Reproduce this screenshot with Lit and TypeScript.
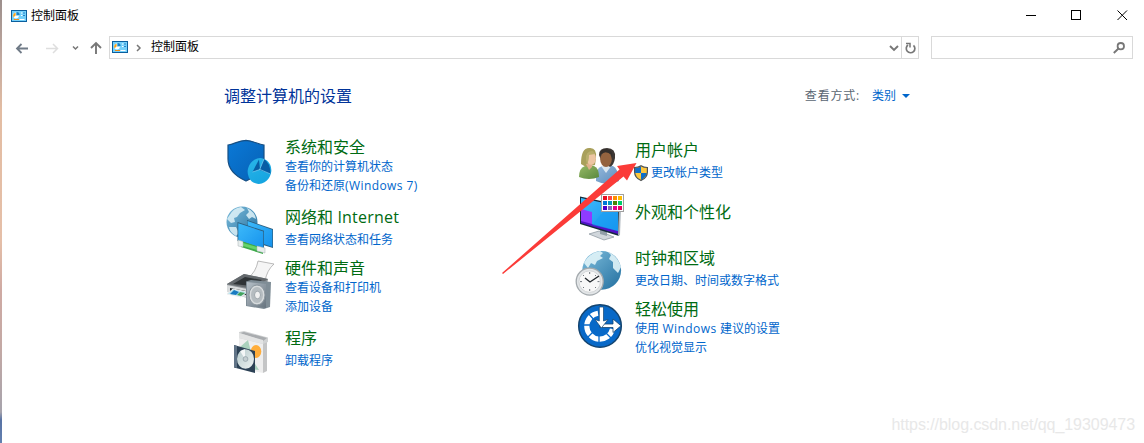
import { LitElement, html, css, svg, TemplateResult } from "lit";
import { customElement } from "lit/decorators.js";

interface Category {
  title: string;
  links: string[];
  icon: string;
  shield?: boolean;
}

const LEFT: Category[] = [
  { title: "系统和安全", links: ["查看你的计算机状态", "备份和还原(Windows 7)"], icon: "security" },
  { title: "网络和 Internet", links: ["查看网络状态和任务"], icon: "network" },
  { title: "硬件和声音", links: ["查看设备和打印机", "添加设备"], icon: "hardware" },
  { title: "程序", links: ["卸载程序"], icon: "programs" },
];
const RIGHT: Category[] = [
  { title: "用户帐户", links: ["更改帐户类型"], icon: "users", shield: true },
  { title: "外观和个性化", links: [], icon: "appearance" },
  { title: "时钟和区域", links: ["更改日期、时间或数字格式"], icon: "clock" },
  { title: "轻松使用", links: ["使用 Windows 建议的设置", "优化视觉显示"], icon: "ease" },
];

const SWATCHES = ["#e81123", "#ff4343", "#ff8c00", "#ffb900", "#0078d7", "#0099bc", "#498205", "#00cc6a", "#4f00c8", "#8764b8", "#e3008c", "#ea005e"];

const panelIcon = html`<svg class="panel" width="16" height="12" viewBox="0 0 16 12">
  <rect x=".5" y=".5" width="15" height="11" fill="#74d0fa" stroke="#0b5f9e"/>
  <path d="M5 2.6A2.9 2.9 0 1 0 8 5.8H5z" fill="#fff"/><path d="M4.6 5.6V2.8A2.8 2.8 0 0 0 2.6 7.2z" fill="#f7a21b"/>
  <path d="M5.6 2v3h3A3 3 0 0 0 5.6 2z" fill="#1d7fc4"/>
  <path d="M10 3h1.5M10 5.5h1.5M8.5 9.5h5" stroke="#fff"/><path d="M12 3h2M12 5.5h2" stroke="#2584c8"/><path d="M3 9.5h5" stroke="#ef8d16"/>
</svg>`;

const smallShield = html`<svg class="uac" width="14" height="16" viewBox="0 0 14 16">
  <path d="M7 .7C5 2 3 2.500 .6 2.500V7c0 4 3 7 6.400 8.500C10.400 14 13.400 11 13.400 7V2.500C11 2.500 9 2 7 .7z" fill="#ffc83d"/>
  <path d="M7 1.200C5 2.500 3.200 3 1.100 3v5H7zM7 8h5.800c-.4 3-2.800 5.600-5.800 7z" fill="#0f6fc9"/>
  <path d="M7 .7C5 2 3 2.500 .6 2.500V7c0 4 3 7 6.400 8.500C10.400 14 13.400 11 13.400 7V2.500C11 2.500 9 2 7 .7z" fill="none" stroke="#4c5157" stroke-width="1.200"/>
</svg>`;

const ART: Record<string, TemplateResult> = {
  security: svg`
    <path d="M3 7C9 6.500 13 2.500 21 2.300C28 2.500 33 6.500 39 7V21C39 31 32 38 21 43C10 38 3 31 3 21z" fill="url(#sh)" stroke="#174f83" stroke-width="1.200"/>
    <ellipse cx="34.500" cy="33" rx="11.700" ry="13" transform="rotate(18 34.500 33)" fill="url(#pie)"/>
    <path d="M27.500 34L34 21.500L35 31.500z" fill="#075da5"/>
    <path d="M34.500 32L39 21Q45.500 25 45.500 36z" fill="#075da5"/>
    <path d="M27.500 34L35 31.500L45.500 36M34.500 32L39 21" fill="none" stroke="#7fd3f5" stroke-width=".7"/>`,
  network: svg`
    <circle cx="17" cy="17" r="15.500" fill="url(#globe)"/>
    <path d="M4 11Q8 3 16 2L20 5L15 8L12 12L9 13L10 17L6 18L2 14zM22 3Q30 7 31 14L27 12L24 14L21 10L24 7zM4 22L11 22L14 28L11 31Q5 28 4 22z" fill="#dff2f8" opacity=".85"/>
    <path d="M22 15L48 24V43L22 35z" fill="#2d5f7f"/><path d="M22.500 16L47.300 24.700V42L23 33.500z" fill="url(#screen)"/>
    <path d="M12.500 17L39 25.800V45L12.500 36z" fill="#2d5f7f"/><path d="M13.300 18.200L38.300 26.500V43.800L13.300 35.300z" fill="url(#screen)"/>
    <path d="M16 36L38 43V49L16 42z" fill="#3dab4a"/><path d="M18 38L32 42V45L18 41z" fill="#65d36a"/>
    <path d="M13 35L18 36.500V42L13 41zM32 41L40 43V48L32 46z" fill="#e8eeee" stroke="#a8b1b2" stroke-width=".5"/>`,
  hardware: svg`
    <path d="M33 0L49 3Q42 9 40 20L23 17Q31 11 33 0z" fill="#f5f5f5" stroke="#aaa" stroke-width=".8"/>
    <path d="M2 23L19 13L43 18L40 35L25 38L2 30z" fill="#8a9094"/><path d="M2 23L19 13L43 18L28 28z" fill="#64696d"/>
    <path d="M8 23L20 16L37 19L27 25z" fill="#2f3437"/><path d="M2 24L22 28V37L2 31z" fill="#d9dcdd"/>
    <path d="M5 27L21 30V34L5 31z" fill="#22282b"/><path d="M2 33L8 28L22 31L16 36z" fill="#b9e6f2" stroke="#eee"/>
    <path d="M5 33L9 29L14 31L11 34z" fill="#197bc1"/><path d="M12 34L15 31L20 32L16 35z" fill="#44a35b"/>
    <path d="M21 20.500L26 19L46 21L45 46L39 48L21 45z" fill="#7f8d96"/><path d="M22 21L41 23V47L22 44.500z" fill="url(#speaker)"/>
    <ellipse cx="32" cy="34" rx="8" ry="10" fill="#d7dbdd" stroke="#8b969d"/><ellipse cx="32" cy="34" rx="6" ry="8" fill="#b5bcc0"/>
    <ellipse cx="32.500" cy="34" rx="3" ry="3.800" fill="#f0f1f1" stroke="#a0a8ad"/>`,
  programs: svg`
    <path d="M14 9L38 14V45L14 40z" fill="#eeeeee"/><path d="M38 14L42 12V43L38 45z" fill="#c4c5c6"/>
    <path d="M14 4L19 3L43 9.500V14L38 16L14 10z" fill="#d1d3d4"/><path d="M15 5L19 4L42 10L38 13z" fill="#a9acaf"/><path d="M14 5L38 12V16L14 10z" fill="#e3e4e4"/>
    <path d="M15 19L23 12L26 24zM27 31L34 42L25 41z" fill="#a9d1bc"/><ellipse cx="31" cy="23.500" rx="5.300" ry="6.500" fill="#ffad3a"/>
    <path d="M9 17L30 23V45L9 39.500z" fill="#2c4155"/><path d="M9 17L12 18V40L9 39z" fill="#607386"/>
    <ellipse cx="20.500" cy="31" rx="8.500" ry="9.800" fill="url(#disc)"/><path d="M20 31L15 23L20 21z" fill="#fff" opacity=".8"/><circle cx="20.500" cy="31" r="2.400" fill="#c5cfd2" stroke="#94a3a9" stroke-width=".8"/>`,
  users: svg`
    <path d="M21 41Q20 28 27 26L38 26Q43 28 44 41Q33 47 21 41z" fill="url(#blue)"/>
    <path d="M26 26L31 33L37 25z" fill="#dce8f1"/>
    <path d="M24 15Q24 8 32 8Q41 8 40 18Q39 25 35 27L26 20z" fill="#3d3734"/>
    <ellipse cx="31" cy="19.500" rx="5.800" ry="7.500" fill="#94633f"/><path d="M25 15Q29 10 36 14L37 19Q39 10 31 9Q25 9 25 15z" fill="#332e2b"/>
    <path d="M4 37Q4 28 10 26L19 26Q24 28 24 37Q14 41 4 37z" fill="url(#green)"/>
    <path d="M6 24Q6 8 14 8Q22 7 21 18L20 25L11 27z" fill="#a9a05b"/>
    <path d="M11 24L17 22V27L14 30z" fill="#dfb08c"/>
    <ellipse cx="16.200" cy="18.300" rx="4.700" ry="6.500" fill="#edc5a3"/><path d="M11 20Q10 11 18 11L20 14L14 15Q14 21 12 24z" fill="#b9ae6c"/>`,
  appearance: svg`
    <path d="M14 41L24 38L39 44L29 47z" fill="#d1d7dc" stroke="#87929b" stroke-width=".7"/><path d="M25 34L32 36V43L25 41z" fill="#929fa8"/>
    <path d="M5 3.500L45 12L44 43L5 31z" fill="#142b3c"/><path d="M44 13L46 14L45 42L43 43z" fill="#acb5bc"/>
    <path d="M6 5L43 13V39L6 29z" fill="url(#screen)"/><path d="M6 16L17 19V32L6 29z" fill="#8f3bff"/><path d="M6 28L43 38V41L6 30z" fill="#5012c6"/>
    <path d="M17 32L35 11L43 13V38z" fill="#169cf4" opacity=".5"/>
    <rect x="26.500" y="1.500" width="22" height="17" fill="#fff" stroke="#a0a0a0"/>
    ${SWATCHES.map((c, i) => svg`<rect x=${28 + (i % 4) * 5} y=${3 + Math.floor(i / 4) * 5} width="4" height="4" fill=${c}/>`)}`,
  clock: svg`
    <circle cx="26.700" cy="20.300" r="19.400" fill="url(#globe)"/>
    <path d="M9 13Q14 3 25 1L28 3L25 6L28 8L22 11L20 15L16 13L13 18zM33 2Q43 6 46 17L43 23L38 18L38 12L34 9L36 5z" fill="#e1f4f8" opacity=".9"/>
    <circle cx="14.700" cy="31.600" r="13.500" fill="#e3e6e8" stroke="#a3a9ad" stroke-width="1.300"/><circle cx="14.700" cy="31.600" r="10.800" fill="#f8f8f8" stroke="#d2d5d7"/>
    <path d="M14.700 22v2M14.700 39v2M5 31.600h2M22.500 31.600h2M8 25l1 1M21 25l-1 1M8 38l1-1M21 38l-1-1" stroke="#737a80"/>
    <path d="M10 28L15 32L24 26" fill="none" stroke="#22272c" stroke-width="1.400"/>`,
  ease: svg`
    <circle cx="25" cy="24" r="21.300" fill="#0869c8" stroke="#14446f" stroke-width="1.500"/>
    <path d="M23 11.300A13 13 0 1 0 37.500 27" fill="none" stroke="#fff" stroke-width="5.200"/>
    <path d="M13 11L20 19M6 23H16M12 36L19 29M24 42V33M36 36L29 29" stroke="#0869c8" stroke-width="1.300"/>
    <path d="M25 22H38V17L46 23.800L38 30.500V25.500H25z" fill="#fff" stroke="#14446f" stroke-width=".8"/>
    <path d="M24.300 5H28.500V19L33 17.500L26.400 26L20 17.500L24.300 19z" fill="#fff" stroke="#14446f" stroke-width=".7"/>`,
};

@customElement("app-root")
export class AppRoot extends LitElement {
  static styles = css`
    :host { display: block; }
    .window { position: relative; box-sizing: border-box; width: 1144px; height: 443px; overflow: hidden; background: #fff; display: flex; color: #000;
      font: 12px/18px "Open Sans", "Noto Sans CJK SC", sans-serif; }
    .edge { width: 2px; flex: none; background: linear-gradient(#9c8f8c 0, #c3aaa0 60px, #e3bda3 110px, #e5bfa8 240px, #cfaaa3 290px, #c3a9a5 350px, #a6a3ac 412px, #5873a4 420px, #6380b0 100%); }
    .main { flex: 1; display: flex; flex-direction: column; }
    .titlebar { height: 31px; display: flex; align-items: center; padding: 0 16px 0 9px; }
    .titlebar .name { margin-left: 4px; flex: 1; }
    .controls { display: flex; gap: 35px; }
    .toolbar { height: 33px; display: flex; align-items: center; padding: 0 11px 0 13px; }
    .nav { width: 94px; flex: none; }
    svg { display: block; flex: none; overflow: visible; }
    .address, .search { box-sizing: border-box; height: 23px; border: 1px solid #d9d9d9; display: flex; align-items: center; }
    .address { width: 810px; padding-left: 2px; }
    .address .panel { margin-top: -1px; }
    .address .crumb { margin-left: 8px; }
    .address .path { margin: -2px auto 0 10px; }
    .reload { box-sizing: border-box; width: 17px; height: 21px; margin-left: 2px; border-left: 1px solid #d9d9d9; display: flex; align-items: center; justify-content: center; }
    .search { width: 202px; margin-left: 12px; justify-content: flex-end; padding-right: 7px; }
    .heading { display: flex; align-items: center; height: 24px; margin: 20px 0 0 222px; width: 686px; justify-content: space-between; }
    .heading h1 { margin: 0; font-weight: 400; font-size: 16px; line-height: 24px; color: #003399; }
    .view { display: flex; align-items: center; color: #5a6672; }
    .view span { letter-spacing: .8px; }
    .view a { margin: 0 6px 0 12px; color: #0066cc; }
    .columns { display: grid; grid-template-columns: 350px 350px; margin: 29px 0 0 223px; }
    .column { display: grid; align-content: start; }
    .left { grid-template-rows: 70px 51px 70px 50px; }
    .right { grid-template-rows: 62px 46px 51px 50px; padding-top: 3px; }
    .category { display: flex; gap: 12px; height: 20px; }
    .text { display: flex; flex-direction: column; white-space: nowrap; }
    .text h2 { margin: 0; font-weight: 400; font-size: 16px; line-height: 20px; color: #006b12; }
    .link { display: flex; align-items: center; height: 19px; line-height: 19px; color: #0066cc; }
    .latin { letter-spacing: .42px; }
    h2 .latin { letter-spacing: .22px; }
    .single .link { margin-top: 3px; }
    .uac { margin: 0 3px 0 -1px; }
    .security { margin-top: 1px; } .network { margin-top: -2px; } .hardware { margin-top: 3px; } .programs { margin-top: 0; }
    .appearance { margin-top: -9px; } .clock { margin-top: 2px; } .ease { margin-top: 3px; }
    .arrow { position: absolute; left: 0; top: 0; }
    .watermark { position: absolute; right: 9px; bottom: 8px; font: 16px/20px "Liberation Sans", sans-serif; letter-spacing: -.06px; color: #e8e8e8; }
  `;

  private label(s: string) {
    return s.split(/([ ()A-Za-z0-9]+)/).map((t) => (/[A-Za-z]/.test(t) ? html`<span class="latin">${t}</span>` : t));
  }

  private category(c: Category) {
    return html`<section class="category ${c.links.length === 1 ? "single" : ""}">
      <svg class=${c.icon} width="48" height="48" viewBox="0 0 48 48">${this.gradients()}${ART[c.icon]}</svg>
      <div class="text"><h2>${this.label(c.title)}</h2>
        ${c.links.map((l) => html`<div class="link">${c.shield ? smallShield : ""}<span>${this.label(l)}</span></div>`)}
      </div></section>`;
  }

  private gradients() {
    const g = (id: string, a: string, b: string) =>
      svg`<linearGradient id=${id} x2="1" y2="1"><stop stop-color=${a}/><stop offset="1" stop-color=${b}/></linearGradient>`;
    return svg`<defs>${g("sh", "#0a79d7", "#0761b5")}${g("pie", "#2ab5e9", "#12a2df")}${g("globe", "#7fbedd", "#226f9f")}${g("screen", "#3dbafa", "#1592ed")}
      ${g("speaker", "#b6c0c8", "#66737e")}${g("disc", "#b7cbcd", "#edf1f0")}${g("blue", "#94b8dc", "#5b8cbb")}${g("green", "#96b966", "#59883d")}</defs>`;
  }

  render() {
    return html`<div class="window">
      <div class="edge"></div>
      <div class="main">
        <header class="titlebar">${panelIcon}<span class="name">控制面板</span>
          <div class="controls">
            <svg width="11" height="11"><path d="M1 5.500h10" stroke="#000"/></svg>
            <svg width="11" height="11"><rect x=".5" y=".5" width="9" height="9" fill="none" stroke="#000"/></svg>
            <svg width="11" height="11"><path d="M.5 .5l9.500 9.500M10 .5L.5 10" stroke="#000" fill="none"/></svg>
          </div>
        </header>
        <nav class="toolbar">
          <svg class="nav" width="94" height="16" fill="none">
            <path d="M13 8.500H2M6.500 4L2 8.500L6.500 13" stroke="#707b87" stroke-width="1.800"/>
            <path d="M31 8.500h11.500M38 4l4.500 4.500L38 13" stroke="#dedede" stroke-width="1.500"/>
            <path d="M58 6.500l2.500 2.500L63 6.500" stroke="#777" stroke-width="1.500"/>
            <path d="M81 14V3M76 8l5-5l5 5" stroke="#777" stroke-width="1.900"/>
          </svg>
          <div class="address">${panelIcon}
            <svg class="crumb" width="5" height="8" fill="none"><path d="M1 1l3 3l-3 3" stroke="#777" stroke-width="1.500"/></svg>
            <span class="path">控制面板</span>
            <svg width="10" height="8" fill="none"><path d="M1 2l4 4l4-4" stroke="#777" stroke-width="1.900"/></svg>
            <div class="reload"><svg width="11" height="12" fill="none"><path d="M3 3A4.300 4.300 0 1 0 8.500 3.300" stroke="#777" stroke-width="1.700"/><path d="M1 1.500h4v4" stroke="#777" stroke-width="1.500"/></svg></div>
          </div>
          <div class="search"><svg width="12" height="12" fill="none" stroke="#777"><circle cx="7.800" cy="4.200" r="3.200" stroke-width="1.800"/><path d="M5.500 6.500L.8 11" stroke-width="1.900"/></svg></div>
        </nav>
        <div class="heading"><h1>调整计算机的设置</h1>
          <div class="view"><span>查看方式:</span><a>类别</a><svg width="8" height="5"><path d="M0 0h8L4 4z" fill="#0066cc"/></svg></div>
        </div>
        <main class="columns">
          <div class="column left">${LEFT.map((c) => this.category(c))}</div>
          <div class="column right">${RIGHT.map((c) => this.category(c))}</div>
        </main>
      </div>
      <svg class="arrow" width="1144" height="443"><path d="M502 273L619.500 169.500L617 166L636.500 163L627 180.500L623.500 176.500L503 274z" fill="#fb3b38"/></svg>
      <div class="watermark">https://blog.csdn.net/qq_19309473</div>
    </div>`;
  }
}
